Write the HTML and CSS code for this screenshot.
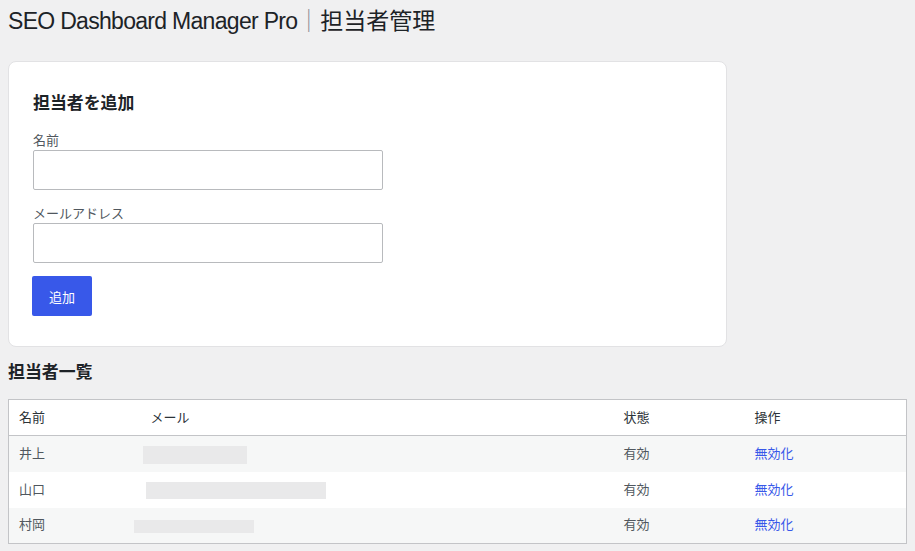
FILE: index.html
```html
<!DOCTYPE html>
<html lang="ja">
  <head>
    <meta charset="UTF-8" />
    <meta name="viewport" content="width=device-width, initial-scale=1.0" />
    <title>担当者管理</title>
    <link rel="stylesheet" href="styles.css">
  </head>
  <body>
    <div class="wrap">
      <h1 class="page-title"><span class="brand">SEO Dashboard Manager Pro</span><span class="divider">｜</span>担当者管理</h1>

      <div class="card">
        <h2 class="section-title">担当者を追加</h2>
        <form class="add-form">
          <label class="field-label" for="staffName">名前</label>
          <input class="text-input" type="text" id="staffName" />
          <label class="field-label" for="staffEmail">メールアドレス</label>
          <input class="text-input" type="email" id="staffEmail" />
          <button class="primary-button" type="button">追加</button>
        </form>
      </div>

      <h2 class="section-title list-title">担当者一覧</h2>
      <table class="staff-table">
        <thead>
          <tr>
            <th class="col-name">名前</th>
            <th class="col-mail">メール</th>
            <th class="col-status">状態</th>
            <th class="col-action">操作</th>
          </tr>
        </thead>
        <tbody>
          <tr>
            <td>井上</td>
            <td><span class="redacted redacted-a"></span></td>
            <td>有効</td>
            <td><a class="row-link" href="#">無効化</a></td>
          </tr>
          <tr>
            <td>山口</td>
            <td><span class="redacted redacted-b"></span></td>
            <td>有効</td>
            <td><a class="row-link" href="#">無効化</a></td>
          </tr>
          <tr>
            <td>村岡</td>
            <td><span class="redacted redacted-c"></span></td>
            <td>有効</td>
            <td><a class="row-link" href="#">無効化</a></td>
          </tr>
        </tbody>
      </table>
    </div>
  </body>
</html>
```

FILE: styles.css
```css
body {
  margin: 0;
  background-color: #f0f0f1;
  color: #1d2327;
  font-family: "Liberation Sans", "Noto Sans CJK JP", sans-serif;
  font-size: 13px;
}

.wrap {
  padding: 0 8px;
}

.page-title {
  font-size: 23px;
  font-weight: 400;
  line-height: 30px;
  margin: 0;
  padding: 6px 0 0 0;
}

.page-title .brand {
  letter-spacing: -0.7px;
}

.page-title .divider {
  color: #8c8f94;
}

.card {
  width: 719px;
  box-sizing: border-box;
  margin-top: 25px;
  padding: 30px 24px 30px 24px;
  background-color: #fff;
  border: 1px solid #e2e2e4;
  border-radius: 8px;
}

.section-title {
  font-size: 16.9px;
  font-weight: 700;
  line-height: 24px;
  margin: 0;
}

.add-form {
  display: flex;
  flex-direction: column;
  align-items: flex-start;
  margin-top: 16px;
}

.field-label {
  color: #50575e;
  line-height: 18px;
  margin-bottom: 0;
}

.text-input {
  width: 350px;
  height: 40px;
  box-sizing: border-box;
  border: 1px solid #b8babd;
  border-radius: 2px;
  background: #fff;
  margin: 0 0 15px 0;
  padding: 0 8px;
}

.primary-button {
  width: 60px;
  height: 40px;
  margin-top: -2px;
  margin-left: -1px;
  background-color: #3858e9;
  color: #fff;
  border: none;
  border-radius: 2px;
  font-family: "Liberation Sans", "Noto Sans CJK JP", sans-serif;
  font-size: 13px;
  cursor: pointer;
}

.list-title {
  margin-top: 14px;
}

.staff-table {
  width: 899px;
  margin-top: 14px;
  border-collapse: collapse;
  border: 1px solid #c3c4c7;
  background-color: #fff;
}

.staff-table th,
.staff-table td {
  height: 36px;
  box-sizing: border-box;
  padding: 0 10px;
  text-align: left;
  vertical-align: middle;
  line-height: 18px;
}

.staff-table th {
  font-weight: 400;
  color: #2c3338;
  border-bottom: 1px solid #c3c4c7;
}

.staff-table td {
  color: #50575e;
}

.staff-table tbody tr:nth-child(odd) {
  background-color: #f6f7f7;
}

.col-name {
  width: 132px;
}

.col-status {
  width: 131px;
}

.col-action {
  width: 162px;
}

.row-link {
  color: #3858e9;
  text-decoration: none;
}

.redacted {
  display: block;
  background-color: #e9e9ea;
}

.redacted-a {
  width: 104px;
  height: 18px;
  margin: 2px 0 0 -8px;
}

.redacted-b {
  width: 180px;
  height: 17px;
  margin: 2px 0 0 -5px;
}

.redacted-c {
  width: 120px;
  height: 13px;
  margin: 2px 0 0 -17px;
}
```
